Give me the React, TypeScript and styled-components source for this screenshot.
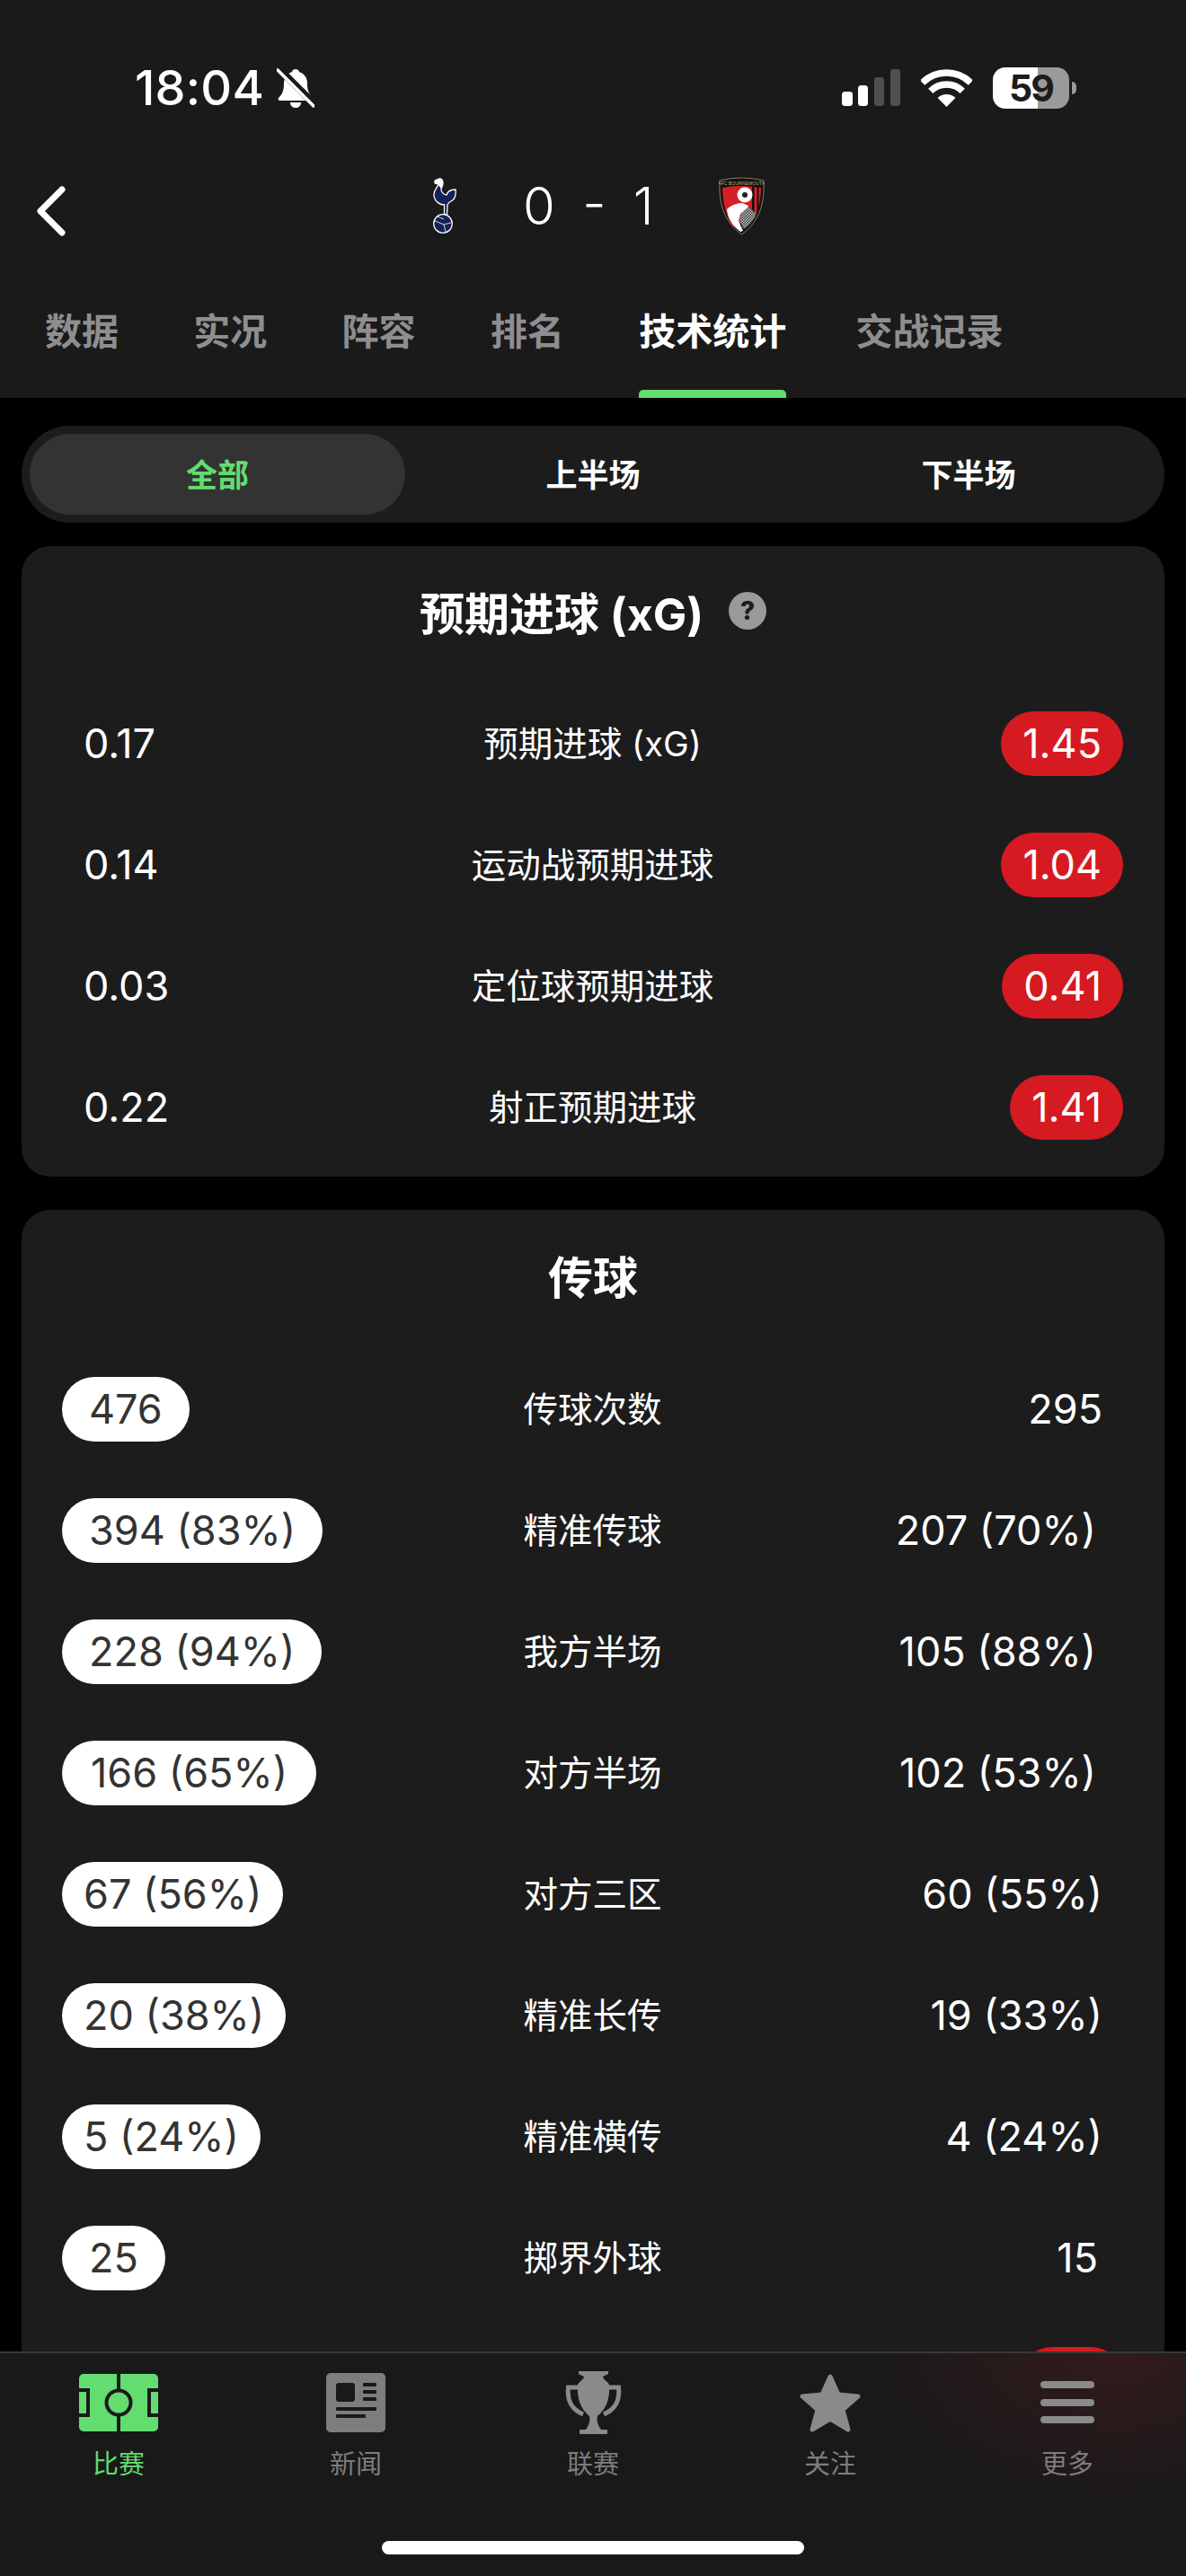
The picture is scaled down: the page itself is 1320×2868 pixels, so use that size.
import React, { ReactElement } from 'react';
import styled, { createGlobalStyle } from 'styled-components';

const GlobalStyle = createGlobalStyle`
  html, body {
    margin: 0;
    padding: 0;
    background: #000;
  }
  * {
    box-sizing: border-box;
  }
`;

const Page = styled.div`
  position: relative;
  width: 1320px;
  height: 2868px;
  overflow: hidden;
  background: #000;
  color: #fff;
  font-family: Inter, 'Noto Sans CJK SC', sans-serif;
`;

const Header = styled.header`
  height: 443px;
  background: #1a1a1b;
`;

const StatusBar = styled.div`
  display: flex;
  height: 170px;
  align-items: center;
  justify-content: space-between;
  padding: 25px 122px 0 150px;
`;

const StatusLeft = styled.div`
  display: flex;
  align-items: center;
  gap: 14px;
`;

const Time = styled.span`
  font-size: 54px;
  font-weight: 500;
  letter-spacing: 0.2px;
  line-height: 60px;
`;

const StatusRight = styled.div`
  display: flex;
  align-items: center;
  gap: 23px;
`;

const BatteryWrap = styled.div`
  display: flex;
  align-items: center;
  gap: 3px;
`;

const BatteryBody = styled.div`
  display: flex;
  width: 85px;
  height: 46px;
  align-items: center;
  justify-content: center;
  border-radius: 14px;
  background: linear-gradient(90deg, #fff 0 50px, #9a9a9a 50px 85px);
  color: #1c1c1c;
  font-size: 41px;
  font-weight: 700;
  letter-spacing: -2px;
`;

const BatteryNub = styled.div`
  width: 5px;
  height: 14px;
  border-radius: 0 7px 7px 0;
  background: #9a9a9a;
`;

const ScoreRow = styled.div`
  display: flex;
  height: 118px;
  align-items: center;
  padding-left: 40px;
`;

const BackButton = styled.div`
  display: flex;
  margin-top: 12px;
`;

const TeamGroup = styled.div`
  display: flex;
  align-items: center;
  margin-left: 409px;
`;

const Score = styled.span`
  margin: 0 72px 0 73px;
  font-size: 58px;
  font-weight: 300;
  line-height: 70px;
  word-spacing: 14px;
`;

const Tabs = styled.nav`
  display: flex;
  height: 155px;
  gap: 83.3px;
  padding: 53px 0 0 50px;
`;

const Tab = styled.div<{ $active?: boolean }>`
  position: relative;
  color: ${(p) => (p.$active ? '#fff' : '#8e8e90')};
  font-size: 41px;
  font-weight: 700;
  line-height: 56px;

  &:last-child {
    margin-left: -6px;
  }
`;

const TabMark = styled.div`
  position: absolute;
  right: 0;
  bottom: 0;
  left: 0;
  height: 9px;
  border-radius: 5px 5px 0 0;
  background: #63dc70;
`;

const Content = styled.main`
  display: flex;
  flex-direction: column;
  padding: 31px 24px 0;
`;

const Segment = styled.div`
  display: grid;
  height: 108px;
  grid-template-columns: repeat(3, 1fr);
  margin-bottom: 26px;
  padding: 9px;
  border-radius: 54px;
  background: #1c1c1c;
`;

const SegmentItem = styled.div<{ $active?: boolean }>`
  display: flex;
  align-items: center;
  justify-content: center;
  padding-bottom: 3px;
  border-radius: 45px;
  background: ${(p) => (p.$active ? '#333334' : 'transparent')};
  color: ${(p) => (p.$active ? '#63dc70' : '#fff')};
  font-size: 35px;
  font-weight: 700;
`;

const Card = styled.section`
  margin-bottom: 37px;
  padding: 34px 0 10px;
  border-radius: 32px;
  background: #1c1c1d;
`;

const CardTitle = styled.div<{ $after: number }>`
  display: flex;
  height: 80px;
  align-items: center;
  justify-content: center;
  gap: 28px;
  margin-bottom: ${(p) => p.$after}px;
  padding-bottom: 4px;
  font-size: 50px;
  font-weight: 700;
`;

const HelpBadge = styled.span`
  display: flex;
  width: 42px;
  height: 42px;
  align-items: center;
  justify-content: center;
  border-radius: 50%;
  background: #9a9a9c;
  color: #1c1c1d;
  font-size: 28px;
  font-weight: 800;
`;

const Row = styled.div`
  display: grid;
  height: 135px;
  align-items: center;
  grid-template-columns: 1fr auto 1fr;
  padding: 0 46px 0 45px;
`;

const RowLabel = styled.span`
  font-size: 38.5px;
  line-height: 50px;
  text-align: center;
`;

const Value = styled.span<{ $fill?: 'white' | 'red'; $pad: number; $end?: boolean }>`
  display: flex;
  height: 72px;
  min-width: 115px;
  align-items: center;
  justify-content: ${(p) => (p.$end ? 'flex-end' : 'flex-start')};
  justify-self: ${(p) => (p.$end ? 'end' : 'start')};
  padding: 0 ${(p) => p.$pad}px;
  border-radius: 36px;
  background: ${(p) => (p.$fill === 'white' ? '#fff' : p.$fill === 'red' ? '#d61a21' : 'transparent')};
  color: ${(p) => (p.$fill === 'white' ? '#333' : '#fff')};
  font-size: 45px;
  white-space: nowrap;
`;

const TabBar = styled.footer`
  position: absolute;
  right: 0;
  bottom: 0;
  left: 0;
  display: flex;
  height: 250px;
  flex-direction: column;
  align-items: center;
  padding-top: 20px;
  border-top: 2px solid #38383a;
  background:
    radial-gradient(280px 170px at 1240px 0, rgba(110, 30, 30, 0.3), rgba(110, 30, 30, 0) 100%),
    #19191a;
`;

const TabBarItems = styled.div`
  display: grid;
  width: 100%;
  grid-template-columns: repeat(5, 1fr);
`;

const BarItem = styled.div<{ $active?: boolean }>`
  display: flex;
  flex-direction: column;
  align-items: center;
  color: ${(p) => (p.$active ? '#63dc70' : '#7d7d7f')};
`;

const BarIcon = styled.div`
  display: flex;
  height: 70px;
  align-items: center;
  justify-content: center;
`;

const BarLabel = styled.span`
  margin-top: 14px;
  font-size: 29px;
  line-height: 40px;
`;

const HomeIndicator = styled.div`
  width: 470px;
  height: 15px;
  margin-top: 65px;
  border-radius: 8px;
  background: #fff;
`;

const BellOffIcon = (): ReactElement => (
  <svg width="42" height="44" viewBox="0 0 42 44">
    <path
      fill="#fff"
      d="M21 1c2 0 3.500 1 4 3 6 2 9 7 9 13 0 8 2 12 6 16 1 2 0 3-2 3H4c-2 0-3-1-2-3 4-4 6-8 6-16 0-6 3-11 9-13 .5-2 2-3 4-3z"
    />
    <path fill="#fff" d="M15 38h12c0 4-3 6-6 6s-6-2-6-6z" />
    <path stroke="#1a1a1b" strokeWidth="8" d="M-1 -3L45 43" />
    <path stroke="#fff" strokeWidth="3.600" strokeLinecap="round" d="M1 2L41 42" />
  </svg>
);

const SignalIcon = (): ReactElement => (
  <svg width="65" height="41" viewBox="0 0 65 41">
    <rect x="0" y="25" width="12" height="16" rx="3.500" fill="#fff" />
    <rect x="18" y="18" width="11" height="23" rx="3.500" fill="#fff" />
    <rect x="36" y="9" width="11" height="32" rx="3.500" fill="#4f4f51" />
    <rect x="54" y="0" width="11" height="41" rx="3.500" fill="#4f4f51" />
  </svg>
);

const WifiIcon = (): ReactElement => (
  <svg width="57" height="42" viewBox="0 0 57 42">
    <path d="M28.500 42L18.600 32.100A14 14 0 0 1 38.400 32.100Z" fill="#fff" />
    <path d="M10.800 24.300A25 25 0 0 1 46.200 24.300" fill="none" stroke="#fff" strokeWidth="7.500" />
    <path d="M1.600 15.100A38 38 0 0 1 55.400 15.100" fill="none" stroke="#fff" strokeWidth="7.500" />
  </svg>
);

const BackIcon = (): ReactElement => (
  <svg width="33" height="56" viewBox="0 0 33 56">
    <path d="M29 4L5 28L29 52" fill="none" stroke="#fff" strokeWidth="7" strokeLinecap="round" strokeLinejoin="round" />
  </svg>
);

const SpursLogo = (): ReactElement => (
  <svg width="27" height="63" viewBox="0 0 27 63">
    <path
      fill="#132257"
      stroke="#fff"
      strokeWidth="1.300"
      d="M2 3L7 1C10 1 11 3 11 6C11 9 9 11 9 13C9 16 12 19 15 19C16 16 19 13 25 13C25.500 18 25 24 20 26C18 27 17 28 16 30L15.500 41L12.500 41L12.500 30C8 30 2 27 1 20C0 14 5 11 6 7L2 6Z"
    />
    <path fill="#fff" d="M2 3L7 1C10 1 11 3 11 6C11 8 9.500 10 9 12L6 8L6 6.500L2 6Z" />
    <circle cx="11" cy="51" r="10.300" fill="#132257" stroke="#fff" strokeWidth="1.300" />
    <path d="M2 48L12 52L20 50M12 52L14 60M5 43L12 46" fill="none" stroke="#fff" strokeWidth="0.800" />
  </svg>
);

const CherriesLogo = (): ReactElement => (
  <svg width="51" height="66" viewBox="0 0 51 66">
    <defs>
      <pattern id="check" width="3" height="3" patternUnits="userSpaceOnUse">
        <rect width="3" height="3" fill="#222" />
        <rect width="1.500" height="1.500" fill="#ddd" />
        <rect x="1.500" y="1.500" width="1.500" height="1.500" fill="#ddd" />
      </pattern>
    </defs>
    <path d="M1 5Q25 -1 50 5C51 30 46 50 25.500 65C5 50 0 30 1 5Z" fill="#111" stroke="#8f7d5c" strokeWidth="1" />
    <path d="M4 13Q25 9 47 13C47 24 45 34 42 41L16 57C9 47 4 30 4 13Z" fill="#d41f26" />
    <rect x="37" y="12" width="2.500" height="32" fill="#111" />
    <rect x="42.500" y="12" width="2" height="28" fill="#111" />
    <circle cx="29" cy="21" r="8.500" fill="#fff" />
    <circle cx="29" cy="21" r="3" fill="#222" />
    <path d="M9 37C13 33 20 30 26 30L33 33L30 40L24 42L22 50L27 61L24 62C15 55 10 47 9 37Z" fill="#fff" />
    <path d="M25 41L33 34L42 42C39 49 33 56 28 59L23 50Z" fill="url(#check)" />
    <text x="25.500" y="9.500" fill="#b9a67e" fontFamily="Liberation Sans, sans-serif" fontSize="5.200" textAnchor="middle">
      AFC BOURNEMOUTH
    </text>
  </svg>
);

const PitchIcon = (): ReactElement => (
  <svg width="88" height="64" viewBox="0 0 88 64">
    <rect width="88" height="64" rx="5" fill="#63dc70" />
    <rect x="42" width="4" height="64" fill="#19191a" />
    <circle cx="44" cy="32" r="13.500" fill="#63dc70" stroke="#19191a" strokeWidth="4" />
    <path d="M0 18H10V46H0M88 18H78V46H88" fill="none" stroke="#19191a" strokeWidth="4" />
  </svg>
);

const NewsIcon = (): ReactElement => (
  <svg width="66" height="66" viewBox="0 0 66 66">
    <rect width="66" height="66" rx="5" fill="#7d7d7f" />
    <rect x="11" y="11" width="21" height="21" rx="3" fill="#19191a" />
    <rect x="41" y="11" width="15" height="4" rx="1" fill="#19191a" />
    <rect x="41" y="19" width="15" height="4" rx="1" fill="#19191a" />
    <rect x="41" y="27" width="15" height="4" rx="1" fill="#19191a" />
    <rect x="11" y="38" width="45" height="4" rx="1" fill="#19191a" />
    <rect x="11" y="46" width="33" height="4" rx="1" fill="#19191a" />
  </svg>
);

const TrophyIcon = (): ReactElement => (
  <svg width="63" height="70" viewBox="0 0 63 70">
    <path
      fill="#8a8a8c"
      d="M15 0H48V3L42 6C42 9 47 11 49 15C50 30 46 42 36 50C35 54 36 60 40 65H23C27 60 28 54 27 50C17 42 13 30 14 15C16 11 21 9 21 6L15 3Z"
    />
    <rect x="16" y="65" width="31" height="5" rx="1" fill="#8a8a8c" />
    <path d="M15 18H3.500C2 32 6 42 20 48M48 18H59.500C61 32 57 42 43 48" fill="none" stroke="#8a8a8c" strokeWidth="5" />
  </svg>
);

const StarIcon = (): ReactElement => (
  <svg width="68" height="67" viewBox="0 0 68 67">
    <polygon
      points="34,4 43,24 65,26 48,41 54,63 34,51 14,63 20,41 3,26 25,24"
      fill="#8a8a8c"
      stroke="#8a8a8c"
      strokeWidth="5"
      strokeLinejoin="round"
    />
  </svg>
);

const MenuIcon = (): ReactElement => (
  <svg width="60" height="48" viewBox="0 0 60 48">
    <rect width="60" height="8" y="0" rx="4" fill="#8a8a8c" />
    <rect width="60" height="8" y="20" rx="4" fill="#8a8a8c" />
    <rect width="60" height="8" y="39" rx="4" fill="#8a8a8c" />
  </svg>
);

const tabs = ['数据', '实况', '阵容', '排名', '技术统计', '交战记录'];

const xgRows = [
  ['0.17', '预期进球 (xG)', '1.45'],
  ['0.14', '运动战预期进球', '1.04'],
  ['0.03', '定位球预期进球', '0.41'],
  ['0.22', '射正预期进球', '1.41'],
];

const passRows: [string, string, string, number, number][] = [
  ['476', '传球次数', '295', 30, 23],
  ['394 (83%)', '精准传球', '207 (70%)', 30, 30],
  ['228 (94%)', '我方半场', '105 (88%)', 30, 30],
  ['166 (65%)', '对方半场', '102 (53%)', 32, 30],
  ['67 (56%)', '对方三区', '60 (55%)', 24, 23],
  ['20 (38%)', '精准长传', '19 (33%)', 24, 23],
  ['5 (24%)', '精准横传', '4 (24%)', 24, 23],
  ['25', '掷界外球', '15', 30, 28],
];

const barItems: [string, ReactElement][] = [
  ['比赛', <PitchIcon key="pitch" />],
  ['新闻', <NewsIcon key="news" />],
  ['联赛', <TrophyIcon key="trophy" />],
  ['关注', <StarIcon key="star" />],
  ['更多', <MenuIcon key="menu" />],
];

const App = (): ReactElement => (
  <Page>
    <GlobalStyle />
    <Header>
      <StatusBar>
        <StatusLeft>
          <Time>18:04</Time>
          <BellOffIcon />
        </StatusLeft>
        <StatusRight>
          <SignalIcon />
          <WifiIcon />
          <BatteryWrap>
            <BatteryBody>59</BatteryBody>
            <BatteryNub />
          </BatteryWrap>
        </StatusRight>
      </StatusBar>
      <ScoreRow>
        <BackButton>
          <BackIcon />
        </BackButton>
        <TeamGroup>
          <SpursLogo />
          <Score>0 - 1</Score>
          <CherriesLogo />
        </TeamGroup>
      </ScoreRow>
      <Tabs>
        {tabs.map((tab) => (
          <Tab key={tab} $active={tab === '技术统计'}>
            {tab}
            {tab === '技术统计' && <TabMark />}
          </Tab>
        ))}
      </Tabs>
    </Header>
    <Content>
      <Segment>
        <SegmentItem $active>全部</SegmentItem>
        <SegmentItem>上半场</SegmentItem>
        <SegmentItem>下半场</SegmentItem>
      </Segment>
      <Card>
        <CardTitle $after={38}>
          预期进球 (xG)
          <HelpBadge>?</HelpBadge>
        </CardTitle>
        {xgRows.map(([home, label, away]) => (
          <Row key={label}>
            <Value $pad={24}>{home}</Value>
            <RowLabel>{label}</RowLabel>
            <Value $pad={24} $end $fill="red">
              {away}
            </Value>
          </Row>
        ))}
      </Card>
      <Card>
        <CardTitle $after={40}>传球</CardTitle>
        {passRows.map(([home, label, away, homePad, awayPad]) => (
          <Row key={label}>
            <Value $pad={homePad} $fill="white">
              {home}
            </Value>
            <RowLabel>{label}</RowLabel>
            <Value $pad={awayPad} $end>
              {away}
            </Value>
          </Row>
        ))}
        <Row>
          <span />
          <span />
          <Value $pad={26} $end $fill="red" />
        </Row>
      </Card>
    </Content>
    <TabBar>
      <TabBarItems>
        {barItems.map(([label, icon], i) => (
          <BarItem key={label} $active={i === 0}>
            <BarIcon>{icon}</BarIcon>
            <BarLabel>{label}</BarLabel>
          </BarItem>
        ))}
      </TabBarItems>
      <HomeIndicator />
    </TabBar>
  </Page>
);

export default App;
